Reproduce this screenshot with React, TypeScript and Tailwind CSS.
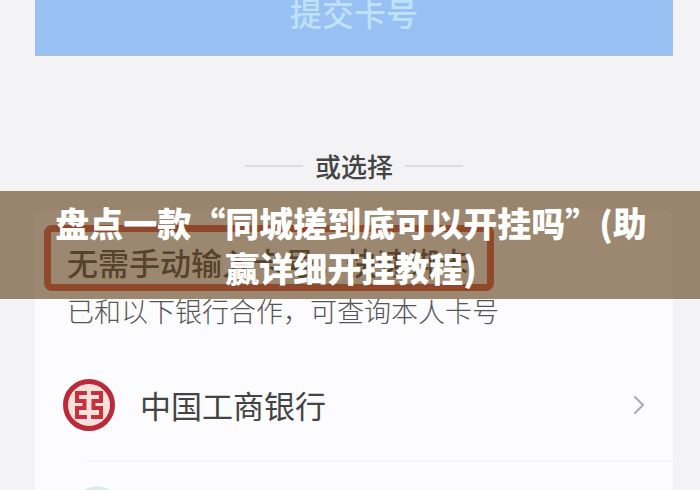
import { ChevronRight } from "lucide-react";

function IcbcLogo() {
  return (
    <svg viewBox="0 0 54 54" className="h-[54px] w-[54px] shrink-0" aria-hidden="true">
      <circle cx="27" cy="27" r="23.5" fill="#fce0da" stroke="#b92b3a" strokeWidth="5" />
      <g fill="none" stroke="#c4303d" strokeWidth="4">
        <path d="M25 15H15V23H22.500V30H15V39H25" />
        <path d="M29 15H39V23H31.500V30H39V39H29" />
      </g>
    </svg>
  );
}

export default function App() {
  return (
    <div className="relative h-screen overflow-hidden bg-[#f3f2f5] pl-[35px] pr-[27px] font-['Noto_Sans_CJK_SC',sans-serif] text-[#444]">
      <button
        type="button"
        className="flex h-14 w-full items-start justify-center border-b-2 border-[#a4bfdc] bg-[#98c0f3] text-[32px] leading-6 font-medium text-[#bee2fb]"
      >
        提交卡号
      </button>

      <div className="mt-[94px] flex items-center justify-center gap-3">
        <span className="h-0.5 w-[58px] bg-[#dddcdf]" />
        <span className="text-[26px] leading-8 font-medium">或选择</span>
        <span className="h-0.5 w-[58px] bg-[#dddcdf]" />
      </div>

      <section className="mt-7 rounded-t-lg bg-[#fcfbfd] pt-[15px]">
        <div className="ml-[9px] flex h-[66px] w-[450px] items-center rounded-lg border-[7px] border-[#d8432f] pt-2 pl-4">
          <h2 className="text-[31px] leading-10 font-medium whitespace-nowrap text-[#333]">
            无需手动输入卡号，快速绑卡
          </h2>
        </div>
        <p className="pt-1 pl-8 text-[27px] leading-8 font-light text-[#555]">
          已和以下银行合作，可查询本人卡号
        </p>

        <button type="button" className="flex w-full items-center pt-[51px] pr-[18px] pb-7 pl-[27px] text-left">
          <IcbcLogo />
          <span className="ml-6 flex-1 text-[31px]">中国工商银行</span>
          <ChevronRight className="h-9 w-8 text-[#aaa]" strokeWidth={1.5} />
        </button>
        <div className="ml-[50px] h-0.5 bg-[#f5f4f6]" />
        <div className="h-20 pt-6 pl-[35px]">
          <svg viewBox="0 0 54 54" className="h-[54px] w-[54px]" aria-hidden="true">
            <circle cx="27" cy="27" r="25" fill="none" stroke="#d9ece6" strokeWidth="3" />
          </svg>
        </div>
      </section>

      <div className="absolute inset-x-0 top-[191px] bg-[#6b4a28]/66 px-[50px] pt-[9px] pb-[9px]">
        <h1 className="pl-0.5 text-center text-[34px] leading-[45px] font-black text-white">
          盘点一款“同城搓到底可以开挂吗”(助赢详细开挂教程)
        </h1>
      </div>
    </div>
  );
}
